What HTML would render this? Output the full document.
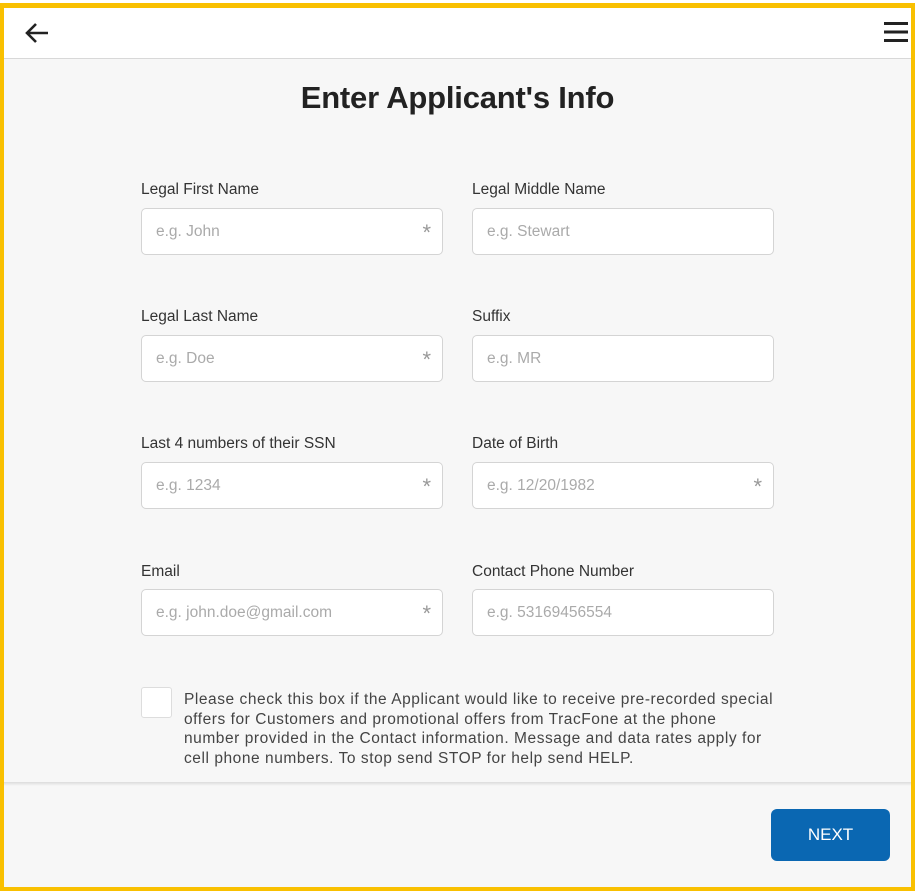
<!DOCTYPE html>
<html><head><style>
*{margin:0;padding:0;box-sizing:border-box}
body{width:915px;height:891px;background:#fff;font-family:"Liberation Sans",Arial,sans-serif;position:relative;overflow:hidden}
.frame{position:absolute;left:0;top:3px;width:915px;height:888px;border:4px solid #f9c000;border-top-width:5px;background:#f7f7f7}
h1{position:absolute;left:0;right:0;top:80px;text-align:center;font-size:31px;font-weight:bold;color:#222;letter-spacing:-0.2px}
.lbl{position:absolute;font-size:15.5px;color:#333}
.inp{position:absolute;width:302px;height:47px;background:#fff;border:1px solid #d4d4d4;border-radius:5px;font-size:15.5px;color:#aaa;padding:14px 0 0 14px}
.inp .ast{position:absolute;right:11px;top:11px;font-size:22px;color:#999}
.cb{position:absolute;left:141px;top:687px;width:31px;height:31px;background:#fff;border:1px solid #ddd;border-radius:3px}
.txt{position:absolute;left:184px;top:690px;width:620px;font-size:15.5px;line-height:19.5px;color:#444;letter-spacing:0.55px;white-space:nowrap}
.sep{position:absolute;left:4px;right:4px;top:782px;height:4px;background:linear-gradient(#dcdcdc,#f7f7f7)}
.btn{position:absolute;left:771px;top:809px;width:119px;height:52px;background:#0a67b2;border-radius:6px;color:#fff;font-size:17px;text-align:center;line-height:52px}
</style></head><body>
<div class="frame"></div>
<div style="position:absolute;left:4px;top:8px;width:907px;height:51px;background:#fff;border-bottom:1px solid #d8d8d8"></div>
<svg style="position:absolute;left:24px;top:21px" width="26" height="24" viewBox="0 0 26 24"><path d="M24 12H3M12 3L3 12l9 9" fill="none" stroke="#222" stroke-width="2.6"/></svg>
<svg style="position:absolute;left:884px;top:21px" width="24" height="22" viewBox="0 0 24 22"><path d="M0 2.5H24M0 11H24M0 19.5H24" stroke="#222" stroke-width="3"/></svg>
<h1>Enter Applicant's Info</h1>

<div class="lbl" style="left:141px;top:181px">Legal First Name</div>
<div class="lbl" style="left:472px;top:181px">Legal Middle Name</div>
<div class="inp" style="left:141px;top:208px">e.g. John<span class="ast">*</span></div>
<div class="inp" style="left:472px;top:208px">e.g. Stewart</div>

<div class="lbl" style="left:141px;top:308px">Legal Last Name</div>
<div class="lbl" style="left:472px;top:308px">Suffix</div>
<div class="inp" style="left:141px;top:335px">e.g. Doe<span class="ast">*</span></div>
<div class="inp" style="left:472px;top:335px">e.g. MR</div>

<div class="lbl" style="left:141px;top:435px">Last 4 numbers of their SSN</div>
<div class="lbl" style="left:472px;top:435px">Date of Birth</div>
<div class="inp" style="left:141px;top:462px">e.g. 1234<span class="ast">*</span></div>
<div class="inp" style="left:472px;top:462px">e.g. 12/20/1982<span class="ast">*</span></div>

<div class="lbl" style="left:141px;top:563px">Email</div>
<div class="lbl" style="left:472px;top:563px">Contact Phone Number</div>
<div class="inp" style="left:141px;top:589px">e.g. john.doe@gmail.com<span class="ast">*</span></div>
<div class="inp" style="left:472px;top:589px">e.g. 53169456554</div>

<div class="cb"></div>
<div class="txt">Please check this box if the Applicant would like to receive pre-recorded special<br>offers for Customers and promotional offers from TracFone at the phone<br>number provided in the Contact information. Message and data rates apply for<br>cell phone numbers. To stop send STOP for help send HELP.</div>
<div class="sep"></div>
<div class="btn">NEXT</div>
</body></html>
